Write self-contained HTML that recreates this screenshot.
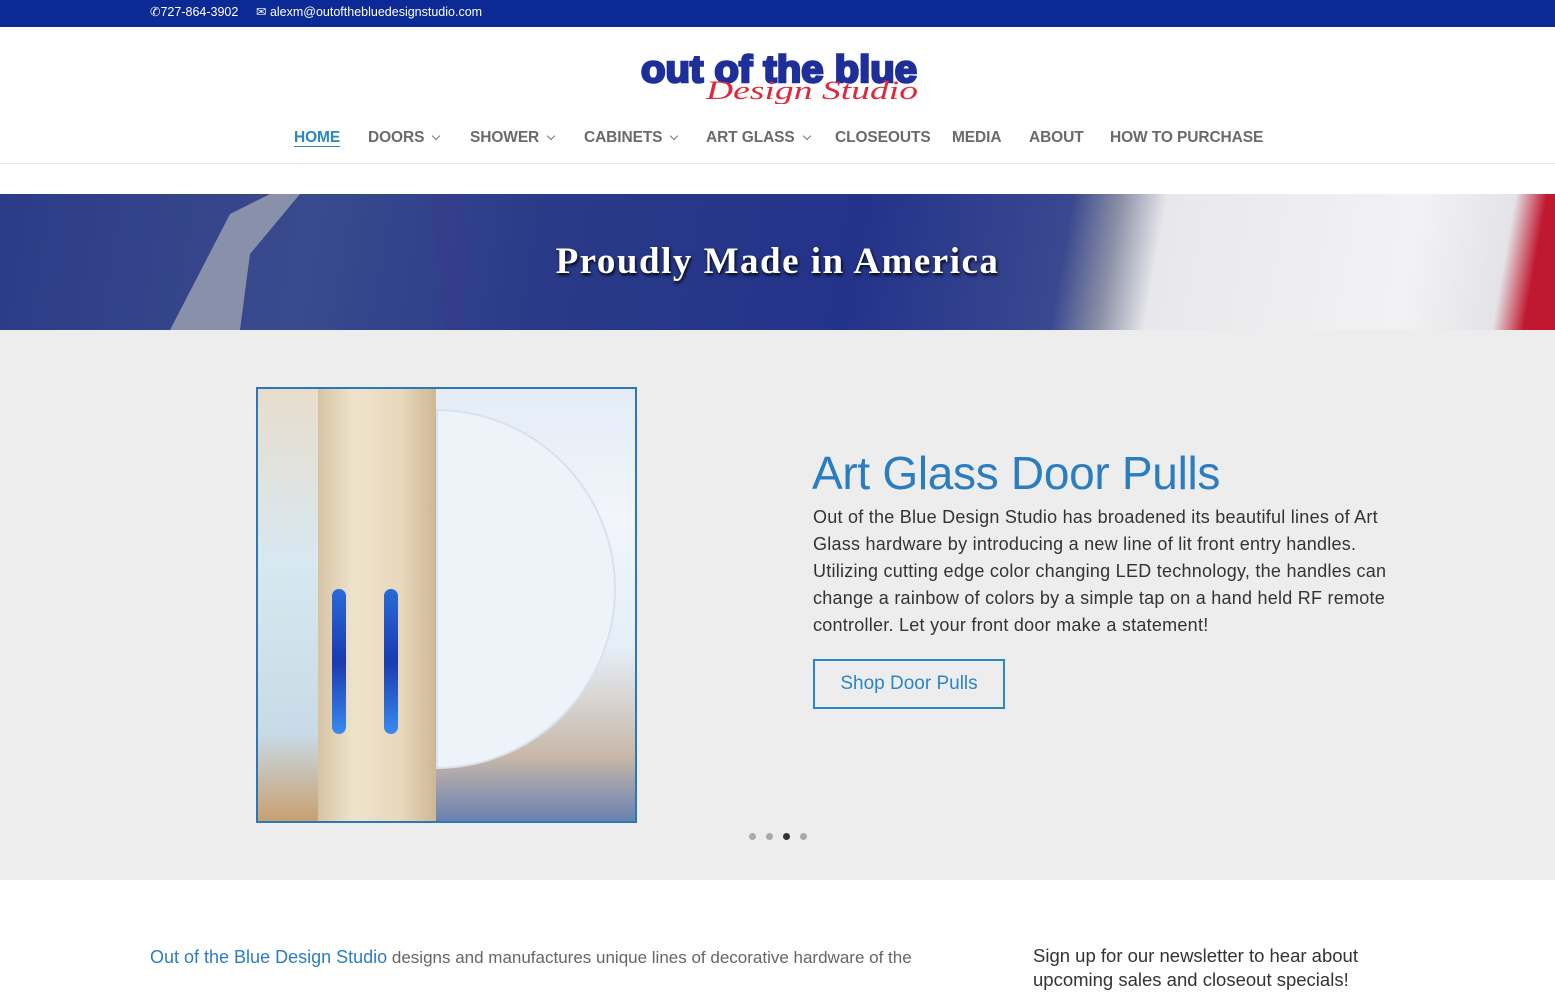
<!DOCTYPE html>
<html><head><meta charset="utf-8"><style>
*{margin:0;padding:0;box-sizing:border-box}
body{width:1555px;height:970px;overflow:hidden;background:#fff;font-family:"Liberation Sans",sans-serif;position:relative}
.top{position:absolute;left:0;top:0;width:1555px;height:27px;background:#0b2a96;color:#fff;font-size:12.5px;line-height:24px}
.top span{position:absolute;top:0}
.logo{position:absolute;left:640px;top:48px;width:280px;height:56px}
.nav{position:absolute;top:129px;left:0;width:1555px;height:35px;border-bottom:1px solid #e8e8e8}
.nav a{position:absolute;top:0;font-size:15.5px;color:#6a6a6a;text-decoration:none;font-weight:bold;letter-spacing:-0.1px}
.nav a.h{color:#2b86c6;text-decoration:underline;text-underline-offset:4px}
.ch{display:inline-block;width:6px;height:6px;border-right:1.6px solid #777;border-bottom:1.6px solid #777;transform:rotate(45deg);margin-left:9px;position:relative;top:-3px}
.hero{position:absolute;left:0;top:194px;width:1555px;height:136px;overflow:hidden;
background:linear-gradient(100deg,#2c3b86 0%,#3a4a8e 20%,#2a3a88 35%,#24338a 55%,#3a4890 68%,#8a8fa6 71%,#e8e8ec 74%,#f2f2f4 90%,#e4e4e8 96%,#c01830 98%)}
.hero h1{position:absolute;left:0;width:1555px;top:46px;text-align:center;font-family:"Liberation Serif",serif;font-size:37px;color:#fff;letter-spacing:1.5px;text-shadow:1px 2px 3px #000}
.slide{position:absolute;left:0;top:330px;width:1555px;height:550px;background:#ededed}
.img{position:absolute;left:256px;top:387px;width:381px;height:436px;border:2px solid #2a78b8;overflow:hidden;background:#dfe6f0}
h2{position:absolute;left:812px;top:446px;font-size:46px;font-weight:normal;color:#2b7dc1;letter-spacing:-0.3px}
.p{position:absolute;left:813px;top:504px;width:585px;font-size:18px;line-height:27px;color:#333;letter-spacing:0.25px}
.btn{position:absolute;left:813px;top:659px;width:192px;height:50px;border:2px solid #2b86c6;color:#2b86c6;font-size:19px;text-align:center;line-height:46px}
.dots{position:absolute;top:833px;left:749px}
.dots i{position:absolute;width:7px;height:7px;border-radius:50%;background:#aaa}
.bt{position:absolute;top:947px;font-size:17px;color:#666}
</style></head><body>
<div class="top"><span style="left:150px">&#9990;727-864-3902</span><span style="left:256px">&#9993; alexm@outofthebluedesignstudio.com</span></div>
<svg class="logo" viewBox="0 0 280 56">
<text x="1" y="34" font-family="Liberation Sans" font-weight="bold" font-size="38" fill="#1f2f9a" stroke="#1f2f9a" stroke-width="2.5" textLength="276" lengthAdjust="spacingAndGlyphs">out of the blue</text>
<text x="66" y="51" font-family="Liberation Serif" font-style="italic" font-size="26" fill="#e0283c" textLength="212" lengthAdjust="spacingAndGlyphs">Design Studio</text>
</svg>
<div class="nav">
<a class="h" style="left:294px">HOME</a>
<a style="left:368px">DOORS<span class="ch"></span></a>
<a style="left:470px">SHOWER<span class="ch"></span></a>
<a style="left:584px">CABINETS<span class="ch"></span></a>
<a style="left:706px">ART GLASS<span class="ch"></span></a>
<a style="left:835px">CLOSEOUTS</a>
<a style="left:952px">MEDIA</a>
<a style="left:1029px">ABOUT</a>
<a style="left:1110px">HOW TO PURCHASE</a>
</div>
<div class="hero">
<svg width="1555" height="136" style="position:absolute;left:0;top:0"><polygon points="170,136 230,20 270,0 300,0 250,60 240,136" fill="#9ea3b2" opacity="0.8"/><polygon points="430,0 460,0 470,60 460,136 445,136" fill="#3b3a8a" opacity=".4"/></svg>
<h1>Proudly Made in America</h1>
</div>
<div class="slide"></div>
<div class="img">
<div style="position:absolute;left:0;top:0;width:60px;height:432px;background:linear-gradient(#e8ddcc,#d8e8f0 40%,#c8dae6 80%,#c8a070)"></div>
<div style="position:absolute;left:60px;top:0;width:118px;height:432px;background:linear-gradient(90deg,#d6c4a4,#efe3cc 30%,#e8d8bc 70%,#cdb894)"></div>
<div style="position:absolute;left:178px;top:0;width:199px;height:432px;background:linear-gradient(#e4ecf6,#f2f5fa 30%,#e6eef8 60%,#c8b8a8 85%,#6a80b0)"></div>
<div style="position:absolute;left:178px;top:20px;width:180px;height:360px;border-radius:0 180px 180px 0;background:#eef3f9;border:2px solid #d8e2ee"></div>
<div style="position:absolute;left:74px;top:200px;width:14px;height:145px;border-radius:7px;background:linear-gradient(#2a6ad8,#1a3ab0,#3a8af0)"></div>
<div style="position:absolute;left:126px;top:200px;width:14px;height:145px;border-radius:7px;background:linear-gradient(#2a6ad8,#1a3ab0,#3a8af0)"></div>
</div>
<h2>Art Glass Door Pulls</h2>
<div class="p">Out of the Blue Design Studio has broadened its beautiful lines of Art Glass hardware by introducing a new line of lit front entry handles. Utilizing cutting edge color changing LED technology, the handles can change a rainbow of colors by a simple tap on a hand held RF remote controller. Let your front door make a statement!</div>
<div class="btn">Shop Door Pulls</div>
<div class="dots"><i style="left:0"></i><i style="left:17px"></i><i style="left:34px;background:#333"></i><i style="left:51px"></i></div>
<div class="bt" style="left:150px"><span style="color:#2b7dc1;font-size:18px">Out of the Blue Design Studio</span> designs and manufactures unique lines of decorative hardware of the</div>
<div class="bt" style="left:1033px;top:944px;font-size:18.5px;color:#333;line-height:24px">Sign up for our newsletter to hear about<br>upcoming sales and closeout specials!</div>
</body></html>
